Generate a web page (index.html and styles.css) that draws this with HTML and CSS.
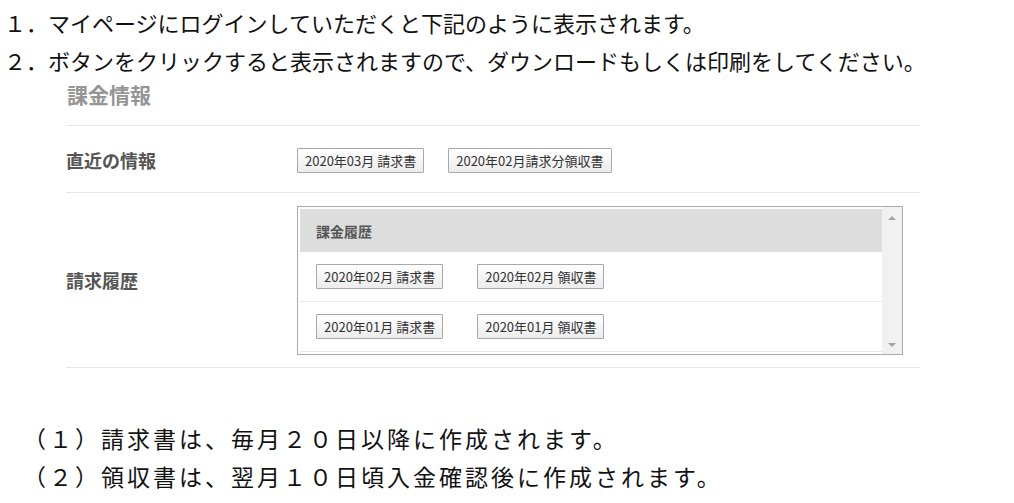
FILE: index.html
```html
<!DOCTYPE html>
<html lang="ja">
<head>
    <meta charset="UTF-8">
    <title>請求書・領収書のダウンロード</title>
    <link rel="stylesheet" href="styles.css">
</head>
<body>
    <ol class="steps">
        <li>１．マイページにログインしていただくと下記のように表示されます。</li>
        <li>２．ボタンをクリックすると表示されますので、ダウンロードもしくは印刷をしてください。</li>
    </ol>

    <section class="billing">
        <h2>課金情報</h2>

        <div class="billing-row">
            <div class="row-label">直近の情報</div>
            <div class="button-group">
                <button class="doc-button">2020年03月 請求書</button>
                <button class="doc-button">2020年02月請求分領収書</button>
            </div>
        </div>

        <div class="billing-row history">
            <div class="row-label">請求履歴</div>
            <div class="history-box">
                <div class="history-list">
                    <div class="history-header">課金履歴</div>
                    <div class="history-item">
                        <button class="doc-button">2020年02月 請求書</button>
                        <button class="doc-button">2020年02月 領収書</button>
                    </div>
                    <div class="history-item">
                        <button class="doc-button">2020年01月 請求書</button>
                        <button class="doc-button">2020年01月 領収書</button>
                    </div>
                </div>
                <div class="scrollbar">
                    <span class="arrow up"></span>
                    <span class="arrow down"></span>
                </div>
            </div>
        </div>
    </section>

    <ul class="notes">
        <li>（１）請求書は、毎月２０日以降に作成されます。</li>
        <li>（２）領収書は、翌月１０日頃入金確認後に作成されます。</li>
    </ul>
</body>
</html>
```

FILE: styles.css
```css
body {
    font-family: "Noto Sans CJK JP", "Noto Sans", sans-serif;
    margin: 0;
    padding: 0;
    color: #111;
    background-color: white;
}
.steps {
    list-style: none;
    margin: 0;
    padding: 3px 0 0 4px;
    font-size: 22px;
    line-height: 38px;
}
.billing {
    width: 854px;
    margin-left: 66px;
}
.billing h2 {
    margin: 0;
    padding: 0 0 16px 1px;
    font-size: 21px;
    line-height: 30px;
    color: #959595;
    border-bottom: 1px solid #e6e6e6;
}
.billing-row {
    display: flex;
    align-items: center;
    padding: 22px 0 19px;
    border-bottom: 1px solid #e6e6e6;
}
.billing-row.history {
    padding: 13px 0 12px;
}
.row-label {
    width: 231px;
    font-size: 18px;
    line-height: 25px;
    font-weight: bold;
    color: #555;
}
.button-group {
    display: flex;
    gap: 24px;
}
.doc-button {
    height: 25px;
    padding: 0 7px;
    font-family: "Noto Sans CJK JP", "Noto Sans", sans-serif;
    font-size: 13px;
    color: #333;
    background: linear-gradient(#ffffff, #ececec);
    border: 1px solid #a8a8a8;
    border-radius: 1px;
    cursor: pointer;
}
.history-box {
    display: flex;
    width: 602px;
    padding: 2px 0 2px 2px;
    border: 1px solid #a9a9a9;
}
.history-list {
    flex: 1;
}
.history-header {
    height: 43px;
    padding-left: 16px;
    display: flex;
    align-items: center;
    background-color: #dddddd;
    font-size: 14px;
    font-weight: bold;
    color: #555;
}
.history-item {
    height: 49px;
    padding-left: 16px;
    display: flex;
    align-items: center;
    gap: 34px;
    border-bottom: 1px solid #e8e8e8;
}
.scrollbar {
    width: 20px;
    margin-top: -2px;
    margin-bottom: -2px;
    padding: 9px 0 7px;
    display: flex;
    flex-direction: column;
    justify-content: space-between;
    align-items: center;
    background-color: #f1f1f1;
}
.arrow {
    width: 0;
    height: 0;
    border-left: 4px solid transparent;
    border-right: 4px solid transparent;
}
.arrow.up {
    border-bottom: 4px solid #a3a3a3;
}
.arrow.down {
    border-top: 4px solid #a3a3a3;
}
.notes {
    list-style: none;
    margin: 51px 0 0;
    padding: 0 0 0 23px;
    font-size: 23px;
    line-height: 38px;
    letter-spacing: 3px;
}
```
